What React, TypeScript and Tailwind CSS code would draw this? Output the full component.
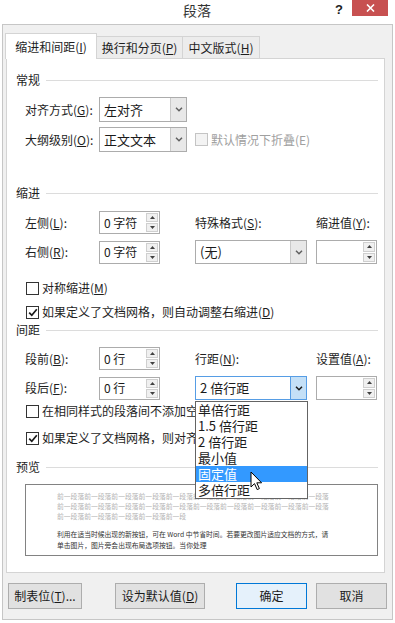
import React from "react";

// Access-key letter, underlined like in Win32 dialogs
function K({ k }: { k: string }) {
  return (
    <>
      (<span className="underline">{k}</span>)
    </>
  );
}

function Chevron({ color = "#404040" }: { color?: string }) {
  return (
    <svg width="8" height="5" viewBox="0 0 8 5">
      <path d="M1 0.8 L4 3.8 L7 0.8" fill="none" stroke={color} strokeWidth="1.5" />
    </svg>
  );
}

function Select({
  value,
  className,
  focused = false,
}: {
  value: string;
  className: string;
  focused?: boolean;
}) {
  return (
    <div
      className={`flex bg-white border ${focused ? "border-[#569de5]" : "border-[#acacac]"} ${className}`}
    >
      <div className="flex-1 flex items-center pl-[4px] text-[13px] text-[#1a1a1a]">{value}</div>
      <div
        className={`w-[16px] flex items-center justify-center border-l ${
          focused ? "bg-[#c4e0f7] border-[#569de5]" : "bg-[#e8e8e8] border-[#c9c9c9]"
        }`}
      >
        <Chevron color={focused ? "#1a1a1a" : "#606060"} />
      </div>
    </div>
  );
}

function Spinner({ value, className }: { value: string; className: string }) {
  return (
    <div className={`flex bg-white border border-[#acacac] ${className}`}>
      <div className="flex-1 flex items-center pl-[4px] text-[12px] text-[#1a1a1a]">{value}</div>
      <div className="w-[13px] flex flex-col gap-[1px] py-[1px] pr-[1px]">
        <div className="flex-1 flex items-center justify-center bg-[#f0f0f0] border border-[#cfcfcf]">
          <svg width="5" height="3" viewBox="0 0 5 3">
            <path d="M0 3 L2.5 0 L5 3 Z" fill="#404040" />
          </svg>
        </div>
        <div className="flex-1 flex items-center justify-center bg-[#f0f0f0] border border-[#cfcfcf]">
          <svg width="5" height="3" viewBox="0 0 5 3">
            <path d="M0 0 L2.5 3 L5 0 Z" fill="#404040" />
          </svg>
        </div>
      </div>
    </div>
  );
}

function CheckBox({ checked = false, disabled = false }: { checked?: boolean; disabled?: boolean }) {
  return (
    <div
      className={`w-[13px] h-[13px] shrink-0 flex items-center justify-center border ${
        disabled ? "border-[#c4c4c4] bg-[#f3f3f3]" : "border-[#333333] bg-white"
      }`}
    >
      {checked && (
        <svg width="10" height="9" viewBox="0 0 10 9">
          <path d="M1.2 4.6 L3.8 7.3 L8.8 1.2" fill="none" stroke="#1a1a1a" strokeWidth="1.7" />
        </svg>
      )}
    </div>
  );
}

function SectionHeader({ title, className }: { title: string; className: string }) {
  return (
    <div className={`flex items-center h-[16px] ${className}`}>
      <span className="text-[12px] text-[#1e1e1e]">{title}</span>
      <div className="flex-1 h-px bg-[#dcdcdc] ml-[6px]" />
    </div>
  );
}

function Button({ children, className }: { children: React.ReactNode; className: string }) {
  return (
    <div className={`h-[26px] flex items-center justify-center text-[12px] text-[#1a1a1a] ${className}`}>
      {children}
    </div>
  );
}

const prevText = "前一段落".repeat(24) + "前一段";
const sampleText =
  "利用在适当时候出现的新按钮，可在 Word 中节省时间。若要更改图片适应文档的方式，请单击图片，图片旁会出现布局选项按钮。当你处理";

const lineOptions = ["单倍行距", "1.5 倍行距", "2 倍行距", "最小值", "固定值", "多倍行距"];

export default function App() {
  return (
    <div className="w-[395px] h-[623px] bg-white relative overflow-hidden font-['Noto_Sans_CJK_SC',sans-serif] text-[#1e1e1e]">
      {/* Title bar */}
      <div className="h-[24px] flex items-start">
        <div className="w-[172px]" />
        <div className="w-[50px] text-center text-[14px] text-[#333333] leading-[20px]">段落</div>
        <div className="flex-1 flex justify-end items-start">
          <span className="text-[13px] font-bold leading-none mt-[3px] mr-[9px] font-['Liberation_Sans',sans-serif]">?</span>
          <div className="w-[36px] h-[16px] bg-[#c75050] flex items-center justify-center mr-[7px]">
            <svg width="9" height="8" viewBox="0 0 9 8">
              <path d="M1 0.5 L8 7.5 M8 0.5 L1 7.5" stroke="#ffffff" strokeWidth="1.6" />
            </svg>
          </div>
        </div>
      </div>

      {/* Window frame */}
      <div className="ml-[2px] w-[391px] h-[596px] border border-[#c6c6c6] bg-[#f0f0f0] pl-[3px] pt-[8px]">
        {/* Tabs */}
        <div className="flex items-end h-[25px] -ml-[1px]">
          <div className="h-[26px] w-[92px] bg-white border border-[#d4d4d4] border-b-0 flex items-center justify-center text-[12px] relative z-10 -mb-[1px]">
            缩进和间距<K k="I" />
          </div>
          <div className="h-[22px] w-[86px] bg-[#ececec] border border-[#d4d4d4] border-l-0 border-b-0 flex items-center justify-center text-[12px]">
            换行和分页<K k="P" />
          </div>
          <div className="h-[22px] w-[77px] bg-[#ececec] border border-[#d4d4d4] border-l-0 border-b-0 flex items-center justify-center text-[12px]">
            中文版式<K k="H" />
          </div>
        </div>

        {/* Panel */}
        <div className="w-[379px] h-[515px] bg-white border border-[#d4d4d4] pl-[9px] pr-[6px] relative">
          <SectionHeader title="常规" className="mt-[13px]" />
          <div className="pl-[9px]">
            <div className="flex items-center h-[25px] mt-[9px]">
              <span className="w-[74px] text-[12px]">
                对齐方式<K k="G" />:
              </span>
              <Select value="左对齐" className="w-[88px] h-[25px]" />
            </div>
            <div className="flex items-center h-[25px] mt-[5px]">
              <span className="w-[74px] text-[12px]">
                大纲级别<K k="O" />:
              </span>
              <Select value="正文文本" className="w-[88px] h-[25px]" />
              <div className="ml-[8px] flex items-center gap-[3px]">
                <CheckBox disabled />
                <span className="text-[12px] text-[#a0a0a0]">默认情况下折叠(E)</span>
              </div>
            </div>
          </div>

          <SectionHeader title="缩进" className="mt-[33px]" />
          <div className="pl-[9px]">
            <div className="flex items-center h-[23px] mt-[10px]">
              <span className="w-[74px] text-[12px]">
                左侧<K k="L" />:
              </span>
              <Spinner value="0 字符" className="w-[61px] h-[23px]" />
              <span className="ml-[35px] w-[121px] text-[12px]">
                特殊格式<K k="S" />:
              </span>
              <span className="text-[12px]">
                缩进值<K k="Y" />:
              </span>
            </div>
            <div className="flex items-center h-[24px] mt-[6px]">
              <span className="w-[74px] text-[12px]">
                右侧<K k="R" />:
              </span>
              <Spinner value="0 字符" className="w-[61px] h-[23px]" />
              <Select value="(无)" className="ml-[35px] w-[112px] h-[24px]" />
              <Spinner value="" className="ml-[9px] w-[61px] h-[24px]" />
            </div>
            <div className="flex items-center gap-[3px] h-[14px] mt-[17px] pl-[1px]">
              <CheckBox />
              <span className="text-[12px]">
                对称缩进<K k="M" />
              </span>
            </div>
            <div className="flex items-center gap-[3px] h-[14px] mt-[10px] pl-[1px]">
              <CheckBox checked />
              <span className="text-[12px]">
                如果定义了文档网格，则自动调整右缩进<K k="D" />
              </span>
            </div>
          </div>

          <SectionHeader title="间距" className="mt-[3px]" />
          <div className="pl-[9px]">
            <div className="flex items-center h-[23px] mt-[9px]">
              <span className="w-[74px] text-[12px]">
                段前<K k="B" />:
              </span>
              <Spinner value="0 行" className="w-[61px] h-[23px]" />
              <span className="ml-[35px] w-[121px] text-[12px]">
                行距<K k="N" />:
              </span>
              <span className="text-[12px]">
                设置值<K k="A" />:
              </span>
            </div>
            <div className="flex items-center h-[24px] mt-[6px]">
              <span className="w-[74px] text-[12px]">
                段后<K k="F" />:
              </span>
              <Spinner value="0 行" className="w-[61px] h-[23px]" />
              <div className="ml-[35px] relative z-20">
                <Select value="2 倍行距" focused className="w-[112px] h-[24px]" />
                {/* Open dropdown list */}
                <div className="absolute left-0 top-[25px] w-[113px] bg-white border border-[#646464] flex flex-col">
                  {lineOptions.map((o) => (
                    <div
                      key={o}
                      className={`h-[16px] flex items-center pl-[2px] text-[13px] ${
                        o === "固定值" ? "bg-[#3399ff] text-white" : "text-[#1a1a1a]"
                      }`}
                    >
                      {o}
                    </div>
                  ))}
                </div>
                {/* Mouse pointer */}
                <svg className="absolute left-[55px] top-[95px]" width="13" height="20" viewBox="0 0 13 20">
                  <path
                    d="M1 1 L1 16 L4.5 12.6 L7.2 18.6 L9.4 17.6 L6.8 11.8 L11.6 11.8 Z"
                    fill="#ffffff"
                    stroke="#000000"
                    strokeWidth="1"
                    strokeLinejoin="round"
                  />
                </svg>
              </div>
              <Spinner value="" className="ml-[9px] w-[61px] h-[24px]" />
            </div>
            {/* These two labels run under the open list, so clip them at its left edge */}
            <div className="flex items-center gap-[3px] h-[14px] mt-[4px] pl-[1px]">
              <CheckBox />
              <span className="w-[154px] overflow-hidden text-[12px] whitespace-nowrap">
                在相同样式的段落间不添加空格<K k="C" />
              </span>
            </div>
            <div className="flex items-center gap-[3px] h-[14px] mt-[13px] pl-[1px]">
              <CheckBox checked />
              <span className="w-[154px] overflow-hidden text-[12px] whitespace-nowrap">
                如果定义了文档网格，则对齐到网格<K k="W" />
              </span>
            </div>
          </div>

          <SectionHeader title="预览" className="mt-[14px]" />
          <div className="ml-[9px] mt-[9px] w-[353px] h-[72px] border border-[#828282] bg-white pl-[31px] pt-[6px]">
            <div className="w-[272px] text-[6.8px] leading-[10px] text-[#b4b4b4] break-all">{prevText}</div>
            <div className="w-[272px] mt-[8px] text-[6.8px] leading-[11px] text-[#333333] break-all">{sampleText}</div>
          </div>
        </div>

        {/* Bottom buttons */}
        <div className="flex items-center mt-[10px] -ml-[1px]">
          <Button className="w-[74px] bg-[#e1e1e1] border border-[#adadad] ml-[3px]">
            制表位<K k="T" />...
          </Button>
          <Button className="w-[90px] bg-[#e1e1e1] border border-[#adadad] ml-[33px]">
            设为默认值<K k="D" />
          </Button>
          <Button className="w-[71px] bg-[#e5f1fb] border border-[#0078d7] ml-[31px]">确定</Button>
          <Button className="w-[71px] bg-[#e1e1e1] border border-[#adadad] ml-[9px]">取消</Button>
        </div>
      </div>
    </div>
  );
}
